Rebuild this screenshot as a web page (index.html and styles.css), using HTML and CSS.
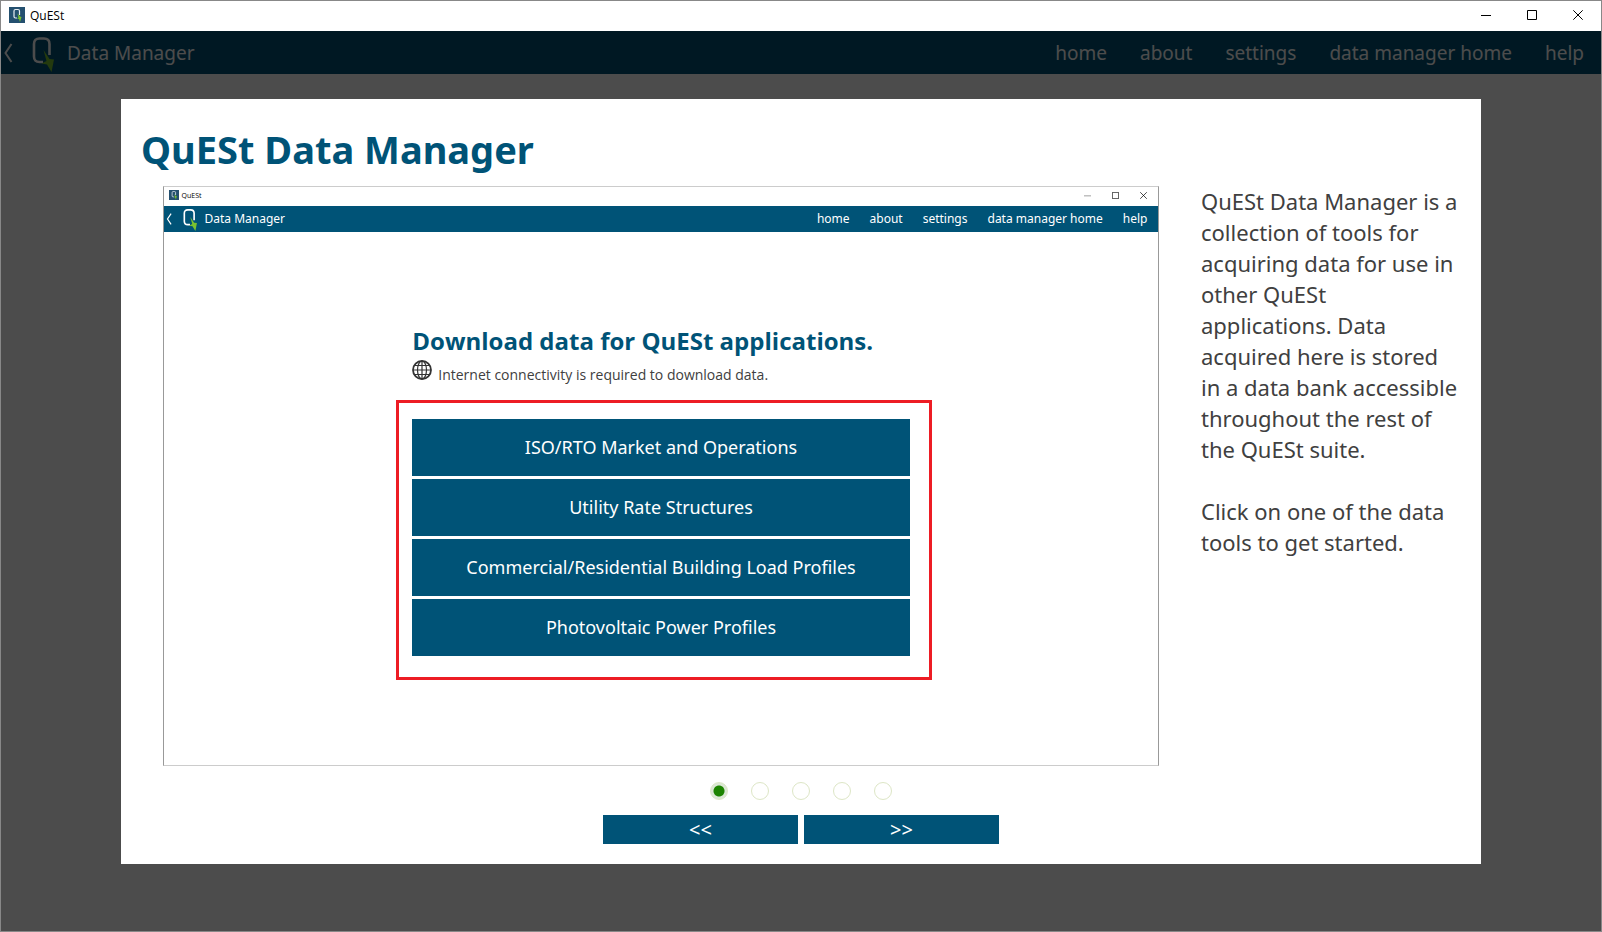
FILE: index.html
```html
<!DOCTYPE html>
<html lang="en">
<head>
<meta charset="utf-8">
<title>QuESt</title>
<link rel="stylesheet" href="styles.css">
</head>
<body>
<svg class="defs" aria-hidden="true">
  <symbol id="logo" viewBox="0 0 22 38">
    <path d="M11 28H7.500Q2 28 2 22.500V10Q2 4.500 7.500 4.500H12Q17.500 4.500 17.500 10V21" fill="none" stroke="#fff" stroke-width="2.600"/>
    <path d="M11.500 16L17.500 25L22 25.500L19.500 38L15 30.500L9.500 29.500L14.500 27Z" fill="#7ac12f"/>
  </symbol>
  <symbol id="back" viewBox="0 0 10 20">
    <path d="M8.500 1L2.500 10L8.500 19" fill="none" stroke="#fff" stroke-width="2"/>
  </symbol>
  <symbol id="app" viewBox="0 0 16 16">
    <path d="M0 0H16V16H0Z" fill="#24506f"/>
    <path d="M8 11H6.500Q5 11 5 9.500V4Q5 2.500 6.500 2.500H9Q10.500 2.500 10.500 4V8" fill="none" stroke="#e8eef2" stroke-width="1.200"/>
    <path d="M8.500 6.500L11 9.500L12.500 10L11 15L10 12L8 11.500L9.500 10.500Z" fill="#7ac12f"/>
  </symbol>
  <symbol id="min" viewBox="0 0 10 10"><path d="M0 5.500H10" stroke="currentColor" fill="none"/></symbol>
  <symbol id="max" viewBox="0 0 10 10"><path d="M.5 .5H9.500V9.500H.5Z" stroke="currentColor" fill="none"/></symbol>
  <symbol id="close" viewBox="0 0 10 10"><path d="M.3 .3L9.700 9.700M9.700 .3L.3 9.700" stroke="currentColor" fill="none"/></symbol>
</svg>

<div class="window">
  <header class="titlebar">
    <svg class="app-icon"><use href="#app"/></svg>
    <span>QuESt</span>
    <div class="window-controls">
      <button type="button" aria-label="Minimize"><svg><use href="#min"/></svg></button>
      <button type="button" aria-label="Maximize"><svg><use href="#max"/></svg></button>
      <button type="button" aria-label="Close"><svg><use href="#close"/></svg></button>
    </div>
  </header>
  <main class="client">
    <nav class="navbar">
      <button type="button" class="back" aria-label="Back"><svg><use href="#back"/></svg></button>
      <svg class="logo"><use href="#logo"/></svg>
      <span class="screen-name">Data Manager</span>
      <a href="#home">home</a>
      <a href="#about">about</a>
      <a href="#settings">settings</a>
      <a href="#manager">data manager home</a>
      <a href="#help">help</a>
    </nav>
    <div class="overlay">
      <section class="modal" role="dialog" aria-labelledby="modal-title">
        <h1 id="modal-title">QuESt Data Manager</h1>
        <div class="slide">
          <div class="stage">
            <div class="preview">
              <div class="titlebar">
                <svg class="app-icon"><use href="#app"/></svg>
                <span>QuESt</span>
                <div class="window-controls">
                  <svg class="faint"><use href="#min"/></svg>
                  <svg><use href="#max"/></svg>
                  <svg><use href="#close"/></svg>
                </div>
              </div>
              <div class="navbar">
                <svg class="back-icon"><use href="#back"/></svg>
                <svg class="logo"><use href="#logo"/></svg>
                <span class="screen-name">Data Manager</span>
                <a href="#home">home</a>
                <a href="#about">about</a>
                <a href="#settings">settings</a>
                <a href="#manager">data manager home</a>
                <a href="#help">help</a>
              </div>
              <div class="download">
                <h2>Download data for QuESt applications.</h2>
                <p class="notice">
                  <svg class="globe" viewBox="0 0 20 20" fill="none" stroke="#333">
                    <circle cx="10" cy="10" r="9" stroke-width="1.800"/>
                    <ellipse cx="10" cy="10" rx="4.500" ry="9" stroke-width="1.200"/>
                    <path d="M10 1V19M1 10H19M2.500 5.500H17.500M2.500 14.500H17.500" stroke-width="1.200"/>
                  </svg>
                  <span>Internet connectivity is required to download data.</span>
                </p>
                <div class="highlight">
                  <button type="button">ISO/RTO Market and Operations</button>
                  <button type="button">Utility Rate Structures</button>
                  <button type="button">Commercial/Residential Building Load Profiles</button>
                  <button type="button">Photovoltaic Power Profiles</button>
                </div>
              </div>
            </div>
          </div>
          <div class="caption">
            <p>QuESt Data Manager is a collection of tools for acquiring data for use in other QuESt applications. Data acquired here is stored in a data bank accessible throughout the rest of the QuESt suite.</p>
            <p>Click on one of the data tools to get started.</p>
          </div>
        </div>
        <div class="dots">
          <input type="radio" name="slide" aria-label="Slide 1" checked>
          <input type="radio" name="slide" aria-label="Slide 2">
          <input type="radio" name="slide" aria-label="Slide 3">
          <input type="radio" name="slide" aria-label="Slide 4">
          <input type="radio" name="slide" aria-label="Slide 5">
        </div>
        <div class="pager">
          <button type="button">&lt;&lt;</button>
          <button type="button">&gt;&gt;</button>
        </div>
      </section>
    </div>
  </main>
</div>
</body>
</html>
```
FILE: styles.css
```css
* { box-sizing: border-box; }
html, body { height: 100%; margin: 0; }
body { font-family: "Noto Sans", "Open Sans", sans-serif; color: #404040; background: #fff; }
h1, h2, p { margin: 0; }
button { border: 0; padding: 0; background: none; font: inherit; color: inherit; }
a { color: inherit; text-decoration: none; }
svg { display: block; flex: none; }
.defs { position: absolute; width: 0; height: 0; }

.window { height: 100%; display: flex; flex-direction: column; border: 1px solid #888; }

.titlebar { display: flex; align-items: center; gap: 5px; height: 30px; flex: none; padding: 0 18px 2px 8px; background: #fff; color: #000; font: 12px "Open Sans", sans-serif; }
.app-icon { width: 16px; height: 16px; }
.window-controls { display: flex; gap: 36px; margin-left: auto; }
.window-controls svg { width: 10px; height: 10px; }

.client { position: relative; flex: 1; min-height: 0; background: #fff; }
.navbar { display: flex; align-items: center; gap: 33px; height: 43px; padding: 0 17px 0 2px; background: #005377; color: #fff; font-size: 19px; }
.back svg { width: 10px; height: 20px; }
.navbar .logo { width: 22px; height: 38px; margin-left: -14px; }
.screen-name { margin-left: -20px; margin-right: auto; }

.overlay { position: absolute; inset: 0; display: flex; align-items: center; justify-content: center; background: rgba(0, 0, 0, 0.7); }
.modal { width: 85%; height: 85%; display: flex; flex-direction: column; padding: 20px; background: #fff; }
h1 { font-size: 38px; line-height: 60px; color: #005377; }

.slide { flex: 1; min-height: 0; display: grid; grid-template-columns: minmax(0, 1fr) 260px; grid-template-rows: minmax(0, 1fr); gap: 20px; margin-top: 7px; }
.stage { display: flex; justify-content: center; }
.preview { display: flex; flex-direction: column; aspect-ratio: 1602 / 932; border: 1px solid #999; border-top-color: #ccc; border-bottom-color: #ccc; }
.preview .titlebar { height: 19px; gap: 3px; padding: 0 11px 2px 5px; font-size: 7px; }
.preview .app-icon { width: 10px; height: 10px; }
.preview .window-controls { gap: 21px; }
.preview .window-controls svg { width: 7px; height: 7px; }
.preview .window-controls .faint { color: #777; }
.preview .navbar { height: 26px; flex: none; gap: 20px; padding: 0 11px 0 2px; font-size: 12px; }
.back-icon { width: 6px; height: 12px; }
.preview .logo { width: 14px; height: 24px; margin-left: -9px; }
.preview .screen-name { margin-left: -12px; }

.download { width: 50%; margin: 0 auto; padding-top: 93px; }
h2 { font-family: "Open Sans", sans-serif; font-size: 24px; line-height: 32px; color: #005377; white-space: nowrap; }
.notice { display: flex; gap: 6px; font-family: "Open Sans", sans-serif; font-size: 14px; line-height: 20px; margin-top: 3px; }
.notice span { padding-top: 5px; }
.globe { width: 20px; height: 20px; }
.highlight { display: grid; gap: 3px; margin: 15px -22px 0 -16px; padding: 16px 19px 21px 13px; border: 3px solid #ed1c24; }
.highlight button { height: 57px; background: #005377; color: #fff; font-size: 18px; }

.caption { font-size: 22px; line-height: 31px; }
.caption p + p { margin-top: 31px; }

.dots { display: flex; justify-content: center; gap: 23px; margin: 16px 0 15px; }
.dots input { appearance: none; width: 18px; height: 18px; margin: 0; border: 1px solid #dde6c6; border-radius: 50%; background: #fff; }
.dots input:checked { background: radial-gradient(circle, #1c8400 5px, #dbe8d5 6px); }
.pager { display: flex; justify-content: center; gap: 6px; }
.pager button { width: 195px; height: 29px; background: #005377; color: #fff; font-size: 20px; line-height: 29px; }
```
